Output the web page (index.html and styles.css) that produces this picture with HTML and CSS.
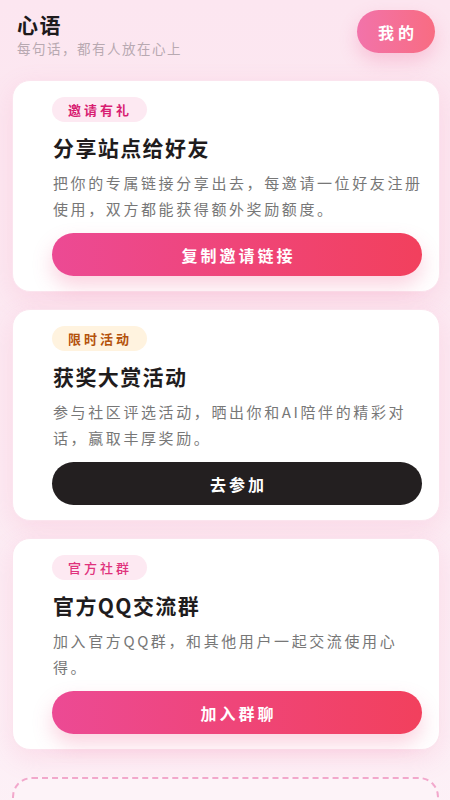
FILE: index.html
```html
<!DOCTYPE html>
<html lang="zh-CN">
<head>
<meta charset="utf-8">
<title>心语</title>
<link rel="stylesheet" href="styles.css">
</head>
<body>
<div class="page">
  <header class="header">
    <div class="brand">
      <h1 class="brand-title">心语</h1>
      <p class="brand-sub">每句话，都有人放在心上</p>
    </div>
    <button class="mine-btn">我的</button>
  </header>

  <section class="card">
    <span class="tag tag-pink">邀请有礼</span>
    <h2 class="card-title">分享站点给好友</h2>
    <p class="card-desc">把你的专属链接分享出去，每邀请一位好友注册使用，双方都能获得额外奖励额度。</p>
    <button class="action action-pink">复制邀请链接</button>
  </section>

  <section class="card">
    <span class="tag tag-orange">限时活动</span>
    <h2 class="card-title">获奖大赏活动</h2>
    <p class="card-desc">参与社区评选活动，晒出你和AI陪伴的精彩对<br>话，赢取丰厚奖励。</p>
    <button class="action action-dark">去参加</button>
  </section>

  <section class="card">
    <span class="tag tag-pink tag-light">官方社群</span>
    <h2 class="card-title">官方QQ交流群</h2>
    <p class="card-desc">加入官方QQ群，和其他用户一起交流使用心得。</p>
    <button class="action action-pink">加入群聊</button>
  </section>

  <section class="card card-dashed"></section>
</div>
</body>
</html>
```

FILE: styles.css
```css
* { box-sizing: border-box; }
html, body {
  margin: 0;
  padding: 0;
}
body {
  font-family: "Noto Sans CJK SC", "Noto Sans", sans-serif;
  background: linear-gradient(180deg, #fce6f0 0%, #fcebf3 50%, #fdf3f8 100%);
  min-height: 800px;
  color: #222;
}
.page {
  padding: 10px 10px 40px 12px;
  display: flex;
  flex-direction: column;
}
.header {
  display: flex;
  justify-content: space-between;
  align-items: flex-start;
  padding: 0 5px 0 5px;
  margin-bottom: 22px;
}
.brand-title {
  margin: 0;
  font-size: 21px;
  line-height: 28px;
  font-weight: 700;
  letter-spacing: 1.5px;
  color: #1e1a1c;
}
.brand-sub {
  margin: 0;
  font-size: 13.5px;
  line-height: 20px;
  letter-spacing: 1.5px;
  color: #b8a9b1;
}
.mine-btn {
  width: 78px;
  height: 43px;
  border: none;
  border-radius: 22px;
  background: linear-gradient(90deg, #f273aa 0%, #f86c82 100%);
  color: #fff;
  font-family: inherit;
  font-size: 16px;
  font-weight: 700;
  letter-spacing: 4px;
  padding: 0 0 0 4px;
  box-shadow: 0 8px 18px rgba(240, 100, 150, 0.28);
}
.card {
  background: #fff;
  border: 1px solid #fbe4ee;
  border-radius: 18px;
  padding: 16px 18px 15px 39px;
  margin-bottom: 17px;
  display: flex;
  flex-direction: column;
  align-items: flex-start;
  box-shadow: 0 8px 26px rgba(240, 120, 170, 0.16);
}
.tag {
  display: inline-block;
  height: 25px;
  line-height: 25px;
  padding: 0 15px 0 16px;
  border-radius: 13px;
  font-size: 13px;
  font-weight: 700;
  letter-spacing: 3px;
}
.tag-pink {
  background: #fde9f2;
  color: #d81e72;
}
.tag-light {
  color: #e0327c;
  font-weight: 500;
}
.tag-orange {
  background: #fff3df;
  color: #b4520c;
}
.card-title {
  margin: 11px 0 0 1px;
  font-size: 21px;
  line-height: 28px;
  font-weight: 700;
  letter-spacing: 1.4px;
  color: #1f1c1d;
}
.card-desc {
  margin: 9px 0 0 1px;
  font-size: 15px;
  line-height: 26px;
  letter-spacing: 2.6px;
  color: #777;
  width: 372px;
}
.action {
  margin-top: 11px;
  width: 370px;
  height: 43px;
  border: none;
  border-radius: 22px;
  color: #fff;
  font-family: inherit;
  font-size: 16px;
  font-weight: 700;
  letter-spacing: 3px;
  padding: 0 0 0 3px;
  align-self: flex-start;
}
.action-pink {
  background: linear-gradient(90deg, #ec4a94 0%, #f2405d 100%);
  box-shadow: 0 10px 20px rgba(240, 80, 130, 0.25);
}
.action-dark {
  background: #231f20;
}
.card-dashed {
  margin-top: 10px;
  height: 120px;
  background: #fdf3f8;
  border: 2px dashed #f2a8cc;
  border-radius: 20px;
  box-shadow: none;
  width: 427px;
}
```
